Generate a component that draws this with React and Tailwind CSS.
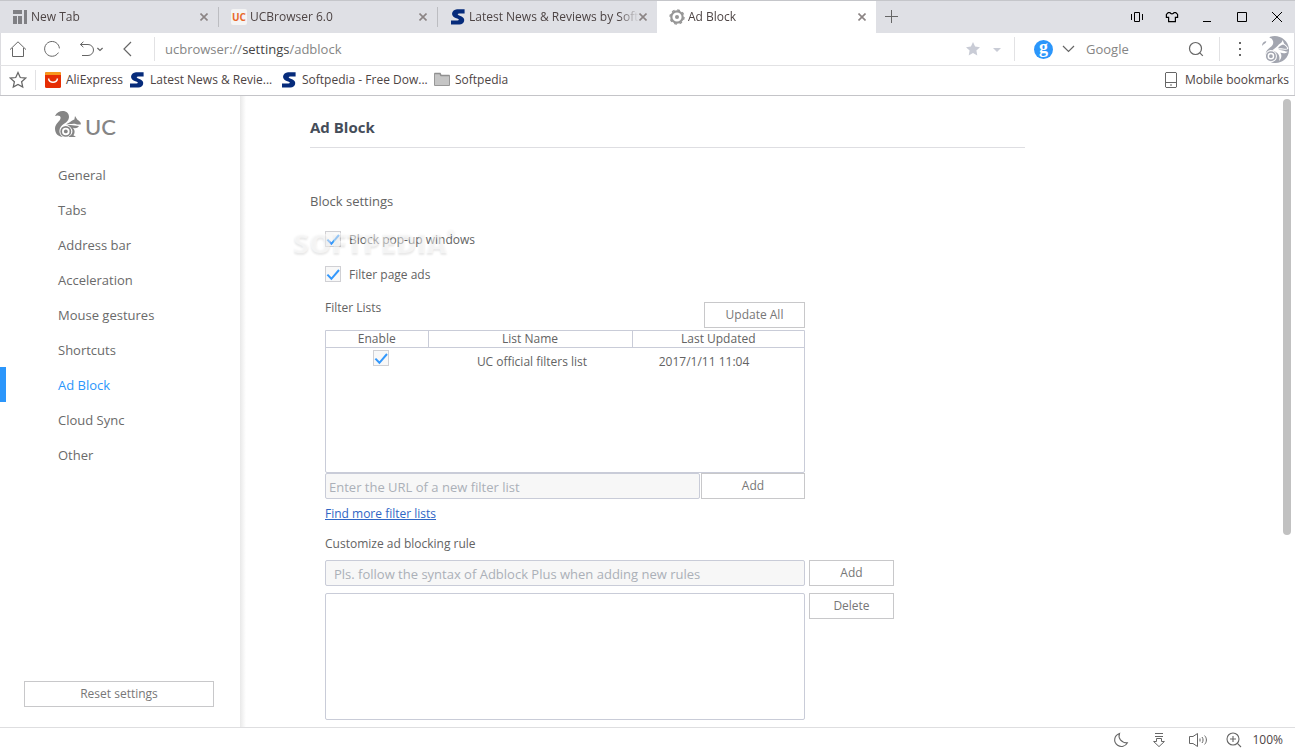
import React from 'react';

const tabs = [
  { title: 'New Tab', icon: 'newtab' },
  { title: 'UCBrowser 6.0', icon: 'uc' },
  { title: 'Latest News & Reviews by Soft', icon: 'softpedia' },
  { title: 'Ad Block', icon: 'gear', active: true },
];

const menuItems = [
  'General',
  'Tabs',
  'Address bar',
  'Acceleration',
  'Mouse gestures',
  'Shortcuts',
  'Ad Block',
  'Cloud Sync',
  'Other',
];

const Icon = ({ children, className = 'w-4 h-4', box = '0 0 16 16', width = 1 }) => (
  <svg
    viewBox={box}
    className={`shrink-0 ${className}`}
    fill="none"
    stroke="currentColor"
    strokeWidth={width}
    aria-hidden="true"
  >
    {children}
  </svg>
);

const SoftpediaIcon = () => (
  <Icon className="w-4 h-4">
    <path
      d="M14.6 0.3V4.6H9.2C7.4 4.6 7.2 5.6 8.6 6.2L11.6 7.4C16 9.3 14.6 15.2 9.4 15.4H1V11.4H7.4C9.2 11.4 9.3 10.4 7.8 9.8L5 8.7C0.4 6.8 1.4 0.8 7 0.3Z"
      fill="#062b7b"
      stroke="none"
    />
  </Icon>
);

const Squirrel = ({ className }) => (
  <svg viewBox="0 0 26 26" className={`shrink-0 ${className}`} aria-hidden="true">
    <path
      d="M0 5C1.5 1.6 4.6 0 7.6 0C11.6 0 14.3 2.6 14 6.2C13.8 9.2 11.6 11 9.4 12.6C6.4 14.6 4.4 16.8 4.4 20C4.4 22.8 5.8 24.8 8 26C3.4 26 0 22.8 0 17.6C0 12.4 5.6 10.2 5.6 6.8C5.6 4.6 2.8 3.8 0 5Z"
      fill="currentColor"
    />
    <path
      d="M11 13.4C13 12.2 15 11.4 16.8 9.8C17.6 8.9 18.6 8.5 19.4 8.4L20 5L22.2 8.6C24.2 9.8 25.6 11 26 13.2C22.8 14.4 20.2 12.2 17.2 13C15 12.8 13 13 11 13.4Z"
      fill="currentColor"
    />
    <path
      d="M12.4 14.4C16.4 13.2 19.4 14.8 24 15C22.6 17.2 20 17.8 17.8 16.8C20.4 19.6 19.8 22.4 18.4 24.2L21 26H13.4C16.8 24 18.2 21.4 17 18.6C16.2 16.4 14.4 15 12.4 14.4Z"
      fill="currentColor"
    />
    <circle cx="10.8" cy="20.4" r="4.6" fill="none" stroke="currentColor" strokeWidth="1.7" />
    <circle cx="10.8" cy="20.4" r="1.9" fill="currentColor" />
  </svg>
);

const Avatar = () => (
  <svg viewBox="0 0 26 26" className="w-[27px] h-[27px] shrink-0" aria-hidden="true">
    <path
      d="M8 0.7C16-2 25.4 3.6 26 12.6C26.4 20.6 20.2 26 13 26C7.8 26 4.6 23 3.8 19.6C3 15.8 4.4 13.6 7.4 11.4C10 9.4 11.4 7.4 10.6 4.8C10 3 9 2 7 1.4Z"
      fill="#a3a6b0"
    />
    <path d="M0 9.6C0 7 1.8 4.6 4.2 5.2C4 7.2 1.2 7.8 0 9.6Z" fill="#a3a6b0" />
    <path d="M9.6 14C13 11.4 14.8 10.2 16.4 8C18 7 19.4 6 19.8 3.8L21.4 7.4C23.8 9 25 10.4 25.4 12.6C22.2 14 19 12.4 15.6 13.2C20.2 13.4 22.4 15 25 15.2C22.2 17.4 20 16.8 17.6 16C19.6 19 18.6 22 16.4 24.2C18 19.4 15.4 15 9.6 14Z" fill="#fff" />
    <path d="M16.8 10.2C18.6 8.6 20 8 21.4 8.6C23.2 9.8 24.2 11 24.2 12.2C21.4 12.8 19.6 11.4 15.2 11.8Z" fill="#a3a6b0" />
    <circle cx="8.6" cy="19.4" r="5.3" fill="#a3a6b0" stroke="#fff" strokeWidth="1" />
    <circle cx="8.6" cy="19.4" r="2.5" fill="none" stroke="#fff" strokeWidth="1.4" />
  </svg>
);

const TabIcon = ({ name }) => {
  if (name === 'newtab') {
    return (
      <Icon className="w-4 h-4">
        <path d="M1 1H10V5H1ZM1 7H5V15H1ZM6 7H10V15H6ZM12 1H15V15H12Z" fill="#808084" stroke="none" />
      </Icon>
    );
  }
  if (name === 'uc') {
    return (
      <span className="w-4 h-4 shrink-0 rounded-xs bg-[#f4f4f4] text-[10px] leading-4 font-bold text-center text-[#e8682c]">
        UC
      </span>
    );
  }
  if (name === 'softpedia') {
    return <SoftpediaIcon />;
  }
  return (
    <Icon className="w-4 h-4 text-[#969696]">
      <circle cx="8" cy="8" r="5.7" strokeWidth="2.2" />
      <circle cx="8" cy="8" r="7" strokeWidth="1.4" strokeDasharray="2.75 2.75" />
      <circle cx="8" cy="8" r="2" fill="currentColor" stroke="none" />
    </Icon>
  );
};

const Tab = ({ tab, divider }) => (
  <div
    className={`w-[219px] min-w-0 flex items-center pl-3 pr-[10px] ${
      tab.active ? 'bg-white h-full' : 'h-5'
    } ${divider ? 'border-r border-[#bcbdc1]' : ''}`}
  >
    <TabIcon name={tab.icon} />
    <span className="ml-[3px] pb-px flex-1 overflow-hidden whitespace-nowrap text-[12px] leading-4 [mask-image:linear-gradient(to_right,#000_88%,transparent)]">
      {tab.title}
    </span>
    <button type="button" aria-label={`Close ${tab.title}`} className="text-[#8b8484]">
      <Icon className="w-2 h-2" box="0 0 8 8" width="1.6">
        <path d="M0.5 0.5L7.5 7.5M7.5 0.5L0.5 7.5" />
      </Icon>
    </button>
  </div>
);

const TitleBar = () => (
  <div className="h-[33px] shrink-0 flex items-center bg-[#dfe0e5] border-t border-[#c5c6ca]">
    {tabs.map((tab, i) => (
      <Tab key={tab.title} tab={tab} divider={i < 2} />
    ))}
    <button type="button" aria-label="Open a new tab" className="ml-[7px] mb-[2px] text-[#666]">
      <Icon className="w-4 h-4">
        <path d="M8.5 2V15M2 8.5H15" />
      </Icon>
    </button>
    <div className="ml-auto flex items-center gap-[19px] pr-[10px] text-black">
      <button type="button" aria-label="Vibrate">
        <Icon>
          <path d="M5.5 3.5H10.5V12.5H5.5ZM2.5 5V11M13.5 5V11" />
        </Icon>
      </button>
      <button type="button" aria-label="Themes">
        <Icon width="1.2">
          <path d="M6 3.6H4.2L2.4 5.4V8.4H4.6V12.6H11.4V8.4H13.6V5.4L11.8 3.6H10C9.4 5.2 6.6 5.2 6 3.6Z" />
        </Icon>
      </button>
      <button type="button" aria-label="Minimize">
        <Icon>
          <path d="M4 12.5H12" />
        </Icon>
      </button>
      <button type="button" aria-label="Maximize">
        <Icon>
          <path d="M3.5 3.5H12.5V12.5H3.5Z" />
        </Icon>
      </button>
      <button type="button" aria-label="Close">
        <Icon>
          <path d="M3 3L13 13M13 3L3 13" />
        </Icon>
      </button>
    </div>
  </div>
);

const Toolbar = () => (
  <div className="h-[33px] shrink-0 flex items-center border-b border-[#e2e2e4] shadow-[inset_1px_0_0_#dcdce0,inset_-1px_0_0_#dcdce0] text-[#666]">
    <div className="w-[155px] h-6 shrink-0 flex items-center pl-[9px] border-r border-[#e2e2e4]">
      <button type="button" aria-label="Home">
        <Icon className="w-[18px] h-[18px]" box="0 0 18 18">
          <path d="M3.5 8V16.5H14.5V8M1 9.6L9 1.8L17 9.6" />
        </Icon>
      </button>
      <button type="button" aria-label="Reload" className="ml-4">
        <Icon className="w-[18px] h-[18px]" box="0 0 18 18">
          <path d="M15.4 12.6A7.4 7.4 0 1 1 16.4 8.4" />
        </Icon>
      </button>
      <button type="button" aria-label="Reopen closed tab" className="ml-[17px] flex items-center">
        <Icon className="w-[18px] h-[18px]" box="0 0 18 18">
          <path d="M5.4 1.8L2.4 4.5L5.4 7.2M2.4 4.5H10A5.3 5.3 0 0 1 10 15.5H4" />
        </Icon>
        <Icon className="w-2 h-2" box="0 0 8 8" width="1.2">
          <path d="M1.4 3L4 5.4L6.6 3" />
        </Icon>
      </button>
      <button type="button" aria-label="Back" className="ml-4">
        <Icon className="w-4 h-4" width="1.2">
          <path d="M11 1L4 8L11 15" />
        </Icon>
      </button>
    </div>
    <a href="#address" className="ml-[10px] flex-1 text-[13px] leading-5 text-[#858585]">
      ucbrowser://<span className="text-[#444]">settings</span>/adblock
    </a>
    <div className="w-[50px] h-6 flex items-center gap-2 text-[#c9ccd6] border-r border-[#e2e2e4]">
      <button type="button" aria-label="Add bookmark">
        <Icon className="w-4 h-4">
          <path
            d="M8 1L10.1 5.6L15 6.2L11.4 9.6L12.3 14.6L8 12.1L3.7 14.6L4.6 9.6L1 6.2L5.9 5.6Z"
            fill="currentColor"
            stroke="none"
          />
        </Icon>
      </button>
      <button type="button" aria-label="Bookmark options">
        <Icon className="w-4 h-4">
          <path d="M4 7H12L8 11Z" fill="currentColor" stroke="none" />
        </Icon>
      </button>
    </div>
    <div className="w-[205px] h-6 flex items-center pl-[19px] pr-[15px] border-r border-[#e2e2e4]">
      <span className="w-[19px] h-[19px] shrink-0 rounded-full bg-[#2b96fb] text-white text-center font-['Liberation_Serif',serif] font-bold text-[18px] leading-[14px]">
        g
      </span>
      <button type="button" aria-label="Choose search engine" className="ml-2">
        <Icon className="w-4 h-4" width="1.2">
          <path d="M2 5L7.5 10.5L13 5" />
        </Icon>
      </button>
      <input
        aria-label="Search"
        placeholder="Google"
        className="ml-[9px] min-w-0 flex-1 text-[13px] leading-5 outline-none placeholder:text-[#858585]"
      />
      <button type="button" aria-label="Start search">
        <Icon className="w-4 h-4" width="1.2">
          <circle cx="7.5" cy="7.5" r="6" />
          <path d="M11.8 11.8L14.8 14.8" />
        </Icon>
      </button>
    </div>
    <button type="button" aria-label="Menu" className="ml-3">
      <Icon className="w-4 h-4">
        <path d="M7 1H9V3H7ZM7 7H9V9H7ZM7 13H9V15H7Z" fill="currentColor" stroke="none" />
      </Icon>
    </button>
    <button type="button" aria-label="Account" className="ml-[14px] mr-[6px]">
      <Avatar />
    </button>
  </div>
);

const BookmarksBar = () => (
  <div className="h-[30px] shrink-0 flex items-center pb-px border-b border-[#c4c4c8] shadow-[inset_1px_0_0_#dcdce0,inset_-1px_0_0_#dcdce0] text-[12px] leading-4">
    <div className="w-9 h-5 shrink-0 flex items-center pl-[9px] border-r border-[#e2e2e4]">
      <button type="button" aria-label="Bookmarks" className="text-[#666]">
        <Icon className="w-[18px] h-[18px]" width="1.1">
          <path d="M8 1.4L10 5.8L14.8 6.3L11.2 9.5L12.2 14.3L8 11.9L3.8 14.3L4.8 9.5L1.2 6.3L6 5.8Z" />
        </Icon>
      </button>
    </div>
    <a href="#aliexpress" className="ml-[9px] w-[84px] flex items-center gap-[5px] whitespace-nowrap">
      <Icon className="w-4 h-4">
        <rect width="16" height="16" rx="1.5" fill="#e62e04" stroke="none" />
        <path d="M0 3V1.5A1.5 1.5 0 0 1 1.5 0H14.5A1.5 1.5 0 0 1 16 1.5V3Z" fill="#f7971d" stroke="none" />
        <path d="M3.5 6.5C4.5 11.5 11.5 11.5 12.5 6.5" stroke="#fff" strokeWidth="1.4" />
      </Icon>
      AliExpress
    </a>
    <a href="#news" className="w-[152px] flex items-center gap-[5px] whitespace-nowrap">
      <SoftpediaIcon />
      Latest News &amp; Revie...
    </a>
    <a href="#downloads" className="w-[153px] flex items-center gap-[5px] whitespace-nowrap">
      <SoftpediaIcon />
      Softpedia - Free Dow...
    </a>
    <button type="button" className="flex items-center gap-[5px]">
      <Icon className="w-4 h-4">
        <path d="M0.5 13.5V1.5H6L7 3.5H15.5V13.5Z" fill="#c5c5c5" stroke="#989898" />
        <path d="M0.5 1.5H6L7 3.5H15.5" stroke="#909090" strokeWidth="1.6" />
      </Icon>
      Softpedia
    </button>
    <button type="button" className="ml-auto mr-[6px] flex items-center gap-[6px] whitespace-nowrap">
      <Icon className="w-4 h-4 text-[#666]">
        <path d="M3 0.5H13L13.5 1V15L13 15.5H3L2.5 15V1ZM2.5 10.5H13.5M7 13H9" />
      </Icon>
      Mobile bookmarks
    </button>
  </div>
);

const Sidebar = () => (
  <aside className="w-[240px] shrink-0 flex flex-col bg-white">
    <div className="h-[61px] shrink-0 flex items-start pt-[15px] pl-[55px] gap-1 text-[#858585]">
      <Squirrel className="w-[26px] h-[26px]" />
      <span className="pt-1 font-['Lato',sans-serif] font-medium text-[22px] leading-6">UC</span>
    </div>
    <nav className="flex flex-col">
      {menuItems.map((item) => (
        <a
          key={item}
          href="#settings"
          className={`h-[35px] flex items-center border-l-6 pl-[52px] pt-[2px] text-[13px] ${
            item === 'Ad Block' ? 'border-[#2b96fb] text-[#2b96fb]' : 'border-transparent text-[#6a6a6a]'
          }`}
        >
          {item}
        </a>
      ))}
    </nav>
    <Button className="mt-auto mb-5 mx-6 w-[190px]">Reset settings</Button>
  </aside>
);

const Button = ({ children, className }) => (
  <button
    type="button"
    className={`h-[26px] shrink-0 border border-[#c8c8ca] bg-white text-[12px] leading-4 text-[#777] ${className}`}
  >
    {children}
  </button>
);

const Checkbox = ({ id, label }) => (
  <span className="relative inline-block w-4 h-4 align-top">
    <input
      id={id}
      type="checkbox"
      defaultChecked
      aria-label={label}
      className="peer block w-4 h-4 appearance-none border border-[#d0d0d4] bg-[#f8f8f8]"
    />
    <svg
      viewBox="0 0 16 16"
      className="absolute inset-0 hidden peer-checked:block pointer-events-none"
      aria-hidden="true"
    >
      <path d="M2.4 8.6L6.4 12.8L14 4" fill="none" stroke="#3398fc" strokeWidth="2" />
    </svg>
  </span>
);

const FilterTable = () => (
  <div className="h-[143px] border border-[#c9ccd8] rounded-b-xs">
    <table className="w-full table-fixed border-collapse text-center">
      <thead>
        <tr className="h-4 border-b border-[#c9ccd8] leading-[14px]">
          <th className="w-[102px] p-0 pt-px font-normal border-r border-[#c9ccd8]">Enable</th>
          <th className="w-[204px] p-0 pt-px font-normal border-r border-[#c9ccd8]">List Name</th>
          <th className="p-0 pt-px font-normal">Last Updated</th>
        </tr>
      </thead>
      <tbody>
        <tr className="align-top">
          <td className="pt-[2px] pl-2">
            <Checkbox id="uc-list" label="Enable UC official filters list" />
          </td>
          <td className="pt-[6px] pl-1 leading-4">UC official filters list</td>
          <td className="pt-[6px] pr-7 leading-4">2017/1/11 11:04</td>
        </tr>
      </tbody>
    </table>
  </div>
);

const Settings = () => (
  <main className="relative flex-1 min-w-0 flex overflow-hidden text-[#636363]">
    <div className="w-[6px] shrink-0 bg-linear-to-r from-[#e9e9e9] to-white" />
    <div className="flex-1 min-w-0 pl-16 pr-4">
      <h1 className="h-[52px] max-w-[715px] pt-[19px] border-b border-[#dedee2] font-bold text-[15px] leading-6 text-[#454d59]">
        Ad Block
      </h1>
      <h2 className="mt-[43px] text-[13px] leading-5">Block settings</h2>
      <div className="ml-[15px] text-[12px] leading-4">
        <div className="mt-5 flex gap-2">
          <Checkbox id="popups" />
          <label htmlFor="popups" className="pt-px">
            Block pop-up windows
          </label>
        </div>
        <div className="mt-[18px] flex gap-2">
          <Checkbox id="page-ads" />
          <label htmlFor="page-ads" className="pt-px">
            Filter page ads
          </label>
        </div>
        <div className="max-w-[480px]">
          <div className="mt-[19px] mb-[2px] flex justify-between">
            <h3 className="-mt-[2px]">Filter Lists</h3>
            <Button className="w-[101px]">Update All</Button>
          </div>
          <FilterTable />
          <div className="flex gap-px">
            <input
              aria-label="Filter list URL"
              placeholder="Enter the URL of a new filter list"
              className="h-[26px] min-w-0 flex-1 px-[3px] pt-[2px] border border-[#c9ccd8] rounded-xs bg-[#f7f7f7] text-[13px] outline-none placeholder:text-[#abb0b8]"
            />
            <Button className="w-[104px]">Add</Button>
          </div>
          <a href="#lists" className="mt-[7px] table text-[#2f66c5] underline">
            Find more filter lists
          </a>
        </div>
        <h3 className="mt-[14px]">Customize ad blocking rule</h3>
        <div className="mt-2 flex gap-1">
          <input
            aria-label="New ad blocking rule"
            placeholder="Pls. follow the syntax of Adblock Plus when adding new rules"
            className="h-[26px] w-[480px] min-w-0 px-2 pt-[2px] border border-[#c9ccd8] rounded-xs bg-[#f7f7f7] text-[13px] outline-none placeholder:text-[#abb0b8]"
          />
          <Button className="w-[85px]">Add</Button>
        </div>
        <div className="mt-[7px] flex items-start gap-1">
          <textarea
            aria-label="Ad blocking rules"
            className="h-[127px] w-[480px] min-w-0 resize-none border border-[#c9ccd8] rounded-xs bg-white outline-none"
          />
          <Button className="w-[85px]">Delete</Button>
        </div>
      </div>
    </div>
    <div className="absolute left-[53px] top-[130px] pointer-events-none flex whitespace-nowrap font-extrabold text-white/50 [text-shadow:0_2px_2px_rgba(0,0,0,0.09)]">
      <span className="text-[28px] leading-8">SOFTPEDIA</span>
      <span className="text-[10px] leading-3">®</span>
    </div>
    <div className="w-2 h-[436px] mt-[3px] mr-1 shrink-0 rounded-full bg-[#c1c1c1]" />
  </main>
);

const StatusBar = () => (
  <footer className="h-6 shrink-0 flex items-center justify-end pr-3 border-t border-[#dedee0] text-[#666]">
    <button type="button" aria-label="Night mode">
      <Icon className="w-4 h-4" width="1.1">
        <path d="M6.5 1.5C4.8 6 8 11 14.4 10.8C12.6 14.4 8 15.6 4.6 13.2C0 10 1 3.4 6.5 1.5Z" />
      </Icon>
    </button>
    <button type="button" aria-label="Downloads" className="ml-[22px]">
      <Icon className="w-4 h-4">
        <path d="M4 1.5H12M4 4.5H12M5.5 6.5H10.5V9.5H13.4L8 14.6L2.6 9.5H5.5Z" />
      </Icon>
    </button>
    <button type="button" aria-label="Sound" className="ml-[21px]">
      <Icon className="w-5 h-4" box="0 0 20 16">
        <path d="M1.5 4.5H5L9.5 1.5V14.5L5 11.5H1.5ZM12 6.5V9.5M14 5C15.4 6.6 15.4 9.4 14 11M16.6 3.6C19 6 19 10 16.6 12.4" />
      </Icon>
    </button>
    <button type="button" className="ml-[18px] flex items-center gap-[10px] text-[12px] leading-4 text-[#4d4444]">
      <Icon className="w-4 h-4 text-[#666]" width="1.1">
        <circle cx="7" cy="7" r="6" />
        <path d="M4 7H10M7 4V10M11.4 11.4L15 15" />
      </Icon>
      100%
    </button>
  </footer>
);

const App = () => {
  return (
    <div className="h-screen flex flex-col bg-white font-['Open_Sans','Noto_Sans',sans-serif] text-[#4d4444]">
      <TitleBar />
      <Toolbar />
      <BookmarksBar />
      <div className="flex-1 min-h-0 flex">
        <Sidebar />
        <Settings />
      </div>
      <StatusBar />
    </div>
  );
};

export default App;
